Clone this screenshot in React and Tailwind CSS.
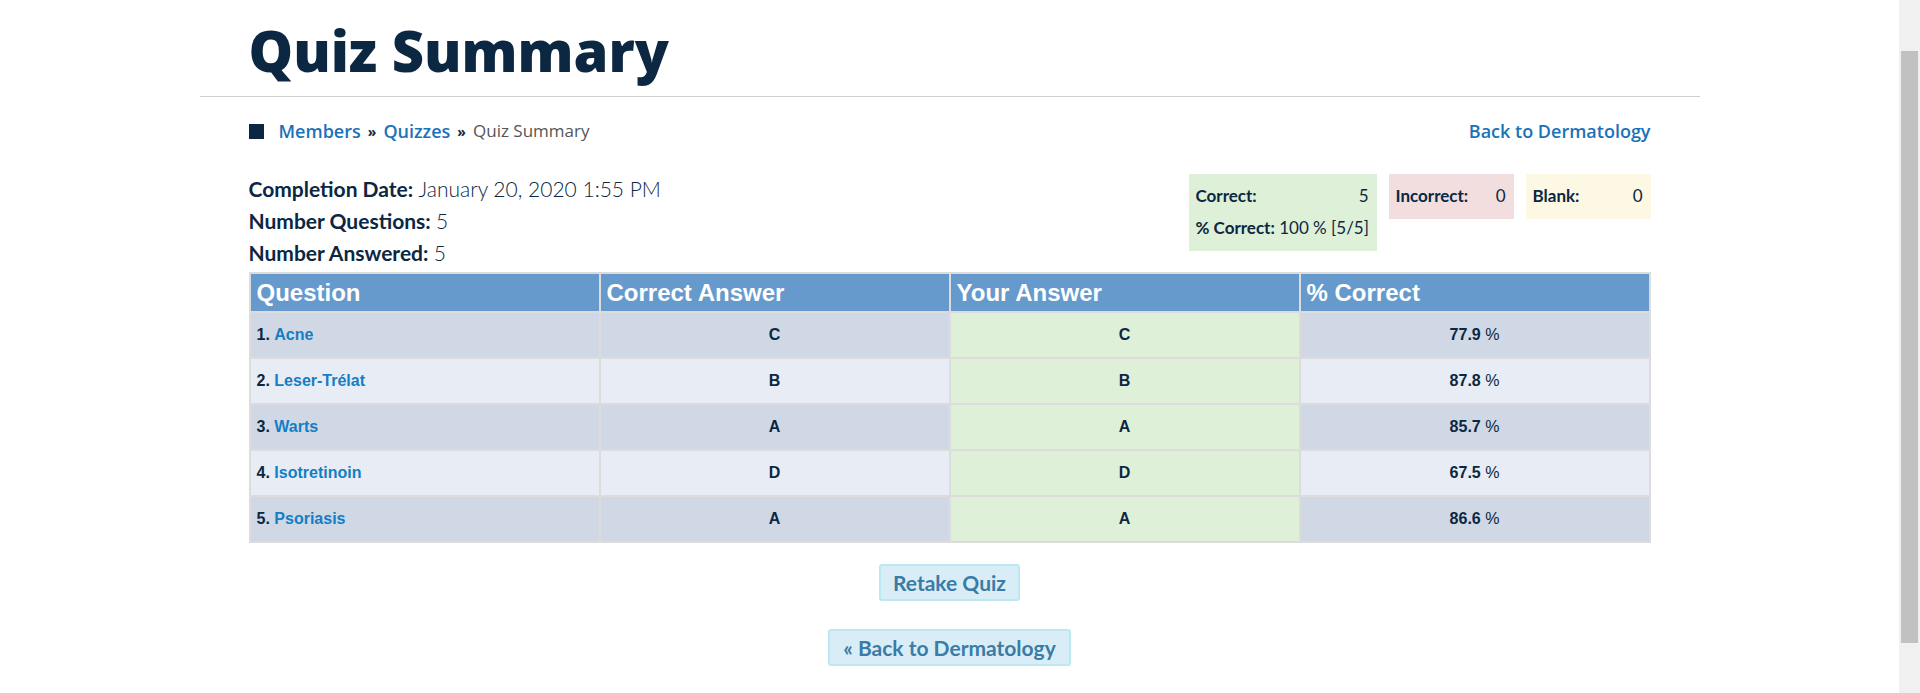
import React from 'react';

const rows = [
  { n: 1, name: 'Acne', correct: 'C', yours: 'C', pct: '77.9' },
  { n: 2, name: 'Leser-Trélat', correct: 'B', yours: 'B', pct: '87.8' },
  { n: 3, name: 'Warts', correct: 'A', yours: 'A', pct: '85.7' },
  { n: 4, name: 'Isotretinoin', correct: 'D', yours: 'D', pct: '67.5' },
  { n: 5, name: 'Psoriasis', correct: 'A', yours: 'A', pct: '86.6' },
];

const App = () => {
  return (
    <div className="flex h-[693px] overflow-hidden bg-white font-['Lato',sans-serif] text-[#0b2742]">
      <main className="flex-1">
        <div className="mx-auto w-[1500px] pt-[22px]">
          {/* Title */}
          <h1 className="px-[49px] font-['Open_Sans',sans-serif] text-[56px] leading-[56px] font-extrabold text-[#0b2742]">
            Quiz Summary
          </h1>
          <hr className="mt-[18px] border-t border-[#cfcfcf]" />

          <div className="px-[49px]">
            {/* Breadcrumb */}
            <div className="mt-[22px] flex h-[24px] items-center justify-between font-['Open_Sans',sans-serif] text-[18px]">
              <div className="flex items-center">
                <span className="mr-[15px] inline-block h-[15px] w-[15px] bg-[#0b2742]"></span>
                <a className="font-semibold text-[#1a72b9]">Members</a>
                <span className="mx-[7px] text-[14px] font-bold text-[#0b2742]">»</span>
                <a className="font-semibold text-[#1a72b9]">Quizzes</a>
                <span className="mx-[7px] text-[14px] font-bold text-[#0b2742]">»</span>
                <span className="text-[17px] text-[#555]">Quiz Summary</span>
              </div>
              <a className="font-semibold text-[#1a72b9]">Back to Dermatology</a>
            </div>

            {/* Summary info + score boxes */}
            <div className="mt-[30px] flex items-start justify-between">
              <div className="text-[21px] leading-[32px]">
                <p><span className="font-bold">Completion Date:</span> <span className="font-light">January 20, 2020 1:55 PM</span></p>
                <p><span className="font-bold">Number Questions:</span> <span className="font-light">5</span></p>
                <p><span className="font-bold">Number Answered:</span> <span className="font-light">5</span></p>
              </div>

              <div className="mt-[1px] flex items-start gap-[12px] text-[17px] leading-[32px]">
                <div className="w-[188px] bg-[#dff0d8] pt-[6px] pb-[7px] pl-[7px] pr-[8px]">
                  <div className="flex justify-between">
                    <span className="font-bold">Correct:</span>
                    <span>5</span>
                  </div>
                  <div className="whitespace-nowrap">
                    <span className="font-bold">% Correct:</span> <span>100 % [5/5]</span>
                  </div>
                </div>
                <div className="flex w-[125px] justify-between bg-[#f2dede] pt-[6px] pb-[7px] pl-[7px] pr-[8px]">
                  <span className="font-bold">Incorrect:</span>
                  <span>0</span>
                </div>
                <div className="flex w-[125px] justify-between bg-[#fcf8e3] pt-[6px] pb-[7px] pl-[7px] pr-[8px]">
                  <span className="font-bold">Blank:</span>
                  <span>0</span>
                </div>
              </div>
            </div>

            {/* Results table */}
            <table className="mt-[3px] w-full table-fixed border-collapse border border-[#cccccc] font-['Liberation_Sans',sans-serif]">
              <thead>
                <tr className="bg-[#669acc] text-left text-[24px] font-bold text-white">
                  <th className="h-[39px] border-2 border-[#dcdcdc] pl-[6px]">Question</th>
                  <th className="h-[39px] border-2 border-[#dcdcdc] pl-[6px]">Correct Answer</th>
                  <th className="h-[39px] border-2 border-[#dcdcdc] pl-[6px]">Your Answer</th>
                  <th className="h-[39px] border-2 border-[#dcdcdc] pl-[6px]">% Correct</th>
                </tr>
              </thead>
              <tbody className="text-[16px]">
                {rows.map((row, i) => (
                  <tr key={row.n} className={i % 2 === 0 ? 'bg-[#d0d8e6]' : 'bg-[#e8ecf4]'}>
                    <td className="h-[46px] border-2 border-[#dcdcdc] pl-[6px]">
                      <span className="font-bold">{row.n}.</span>{' '}
                      <a className="font-bold text-[#137ec6]">{row.name}</a>
                    </td>
                    <td className="h-[46px] border-2 border-[#dcdcdc] text-center font-bold">{row.correct}</td>
                    <td className="h-[46px] border-2 border-[#dcdcdc] bg-[#dff0d8] text-center font-bold">{row.yours}</td>
                    <td className="h-[46px] border-2 border-[#dcdcdc] text-center">
                      <span className="font-bold">{row.pct}</span> %
                    </td>
                  </tr>
                ))}
              </tbody>
            </table>

            {/* Buttons */}
            <div className="mt-[21px] flex flex-col items-center gap-[28px] text-[21px] font-bold text-[#3a7ca6]">
              <button className="flex h-[37px] items-center rounded-[3px] border-2 border-[#bce8f1] bg-[#d9edf7] px-[12px]">
                Retake Quiz
              </button>
              <button className="flex h-[37px] items-center rounded-[3px] border-2 border-[#bce8f1] bg-[#d9edf7] px-[13px]">
                « Back to Dermatology
              </button>
            </div>
          </div>
        </div>
      </main>

      {/* Browser scrollbar */}
      <aside className="w-[21px] shrink-0 bg-[#f0f0f0] px-[2px] pt-[51px]">
        <div className="h-[592px] bg-[#c1c1c1]"></div>
      </aside>
    </div>
  );
};

export default App;
